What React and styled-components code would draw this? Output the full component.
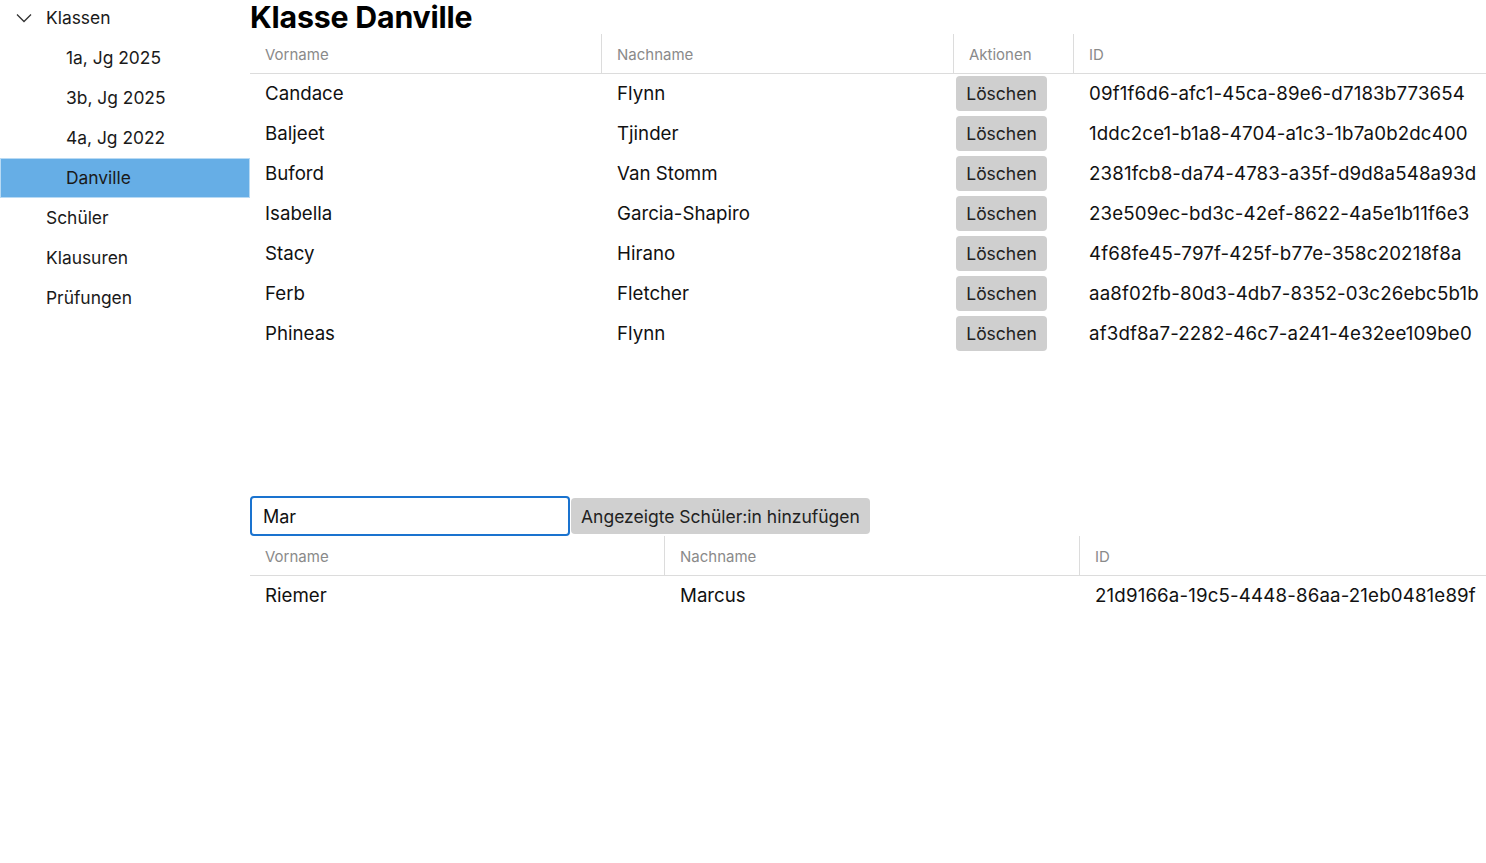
import React from "react";
import styled, { createGlobalStyle } from "styled-components";

const Global = createGlobalStyle`
  html, body { margin: 0; padding: 0; background: #fff; }
  body { font-family: Inter, "Noto Sans", sans-serif; color: #111; }
  * { box-sizing: border-box; }
`;

const Page = styled.div`
  display: flex;
  width: 1486px;
  height: 863px;
`;

const Sidebar = styled.nav`
  width: 250px;
  flex: none;
  display: flex;
  flex-direction: column;
`;

const NavRow = styled.div`
  height: ${(p) => (p.$first ? "38px" : "40px")};
  padding-bottom: ${(p) => (p.$first ? "3px" : "1px")};
  display: flex;
  align-items: center;
  padding-left: ${(p) => p.$indent}px;
  font-size: 17.4px;
  color: #1a1a1a;
  background: ${(p) => (p.$selected ? "#66aee6" : "transparent")};
  border: 1px solid ${(p) => (p.$selected ? "#b8daf4" : "transparent")};
`;

const Chevron = styled.svg`
  width: 16px;
  height: 10px;
  margin-right: 14px;
  margin-left: -31px;
`;

const Main = styled.main`
  flex: 1;
  display: flex;
  flex-direction: column;
  min-width: 0;
`;

const Title = styled.h1`
  margin: 0;
  height: 34px;
  font-size: 30.3px;
  font-weight: 700;
  line-height: 34px;
  color: #000;
  letter-spacing: -0.2px;
`;

const TableArea = styled.div`
  height: 462px;
`;

const Grid = styled.div`
  display: grid;
  grid-template-columns: ${(p) => p.$cols};
`;

const HeadCell = styled.div`
  height: 40px;
  display: flex;
  align-items: center;
  padding: 2px 0 0 ${(p) => p.$pad || 15}px;
  font-size: 15px;
  color: #8a8a8a;
  border-bottom: 1px solid #dcdcdc;
  border-left: ${(p) => (p.$sep ? "1px solid #dcdcdc" : "none")};
`;

const Cell = styled.div`
  height: 40px;
  display: flex;
  align-items: center;
  padding: 0 0 1px ${(p) => p.$pad || 15}px;
  font-size: 18.7px;
  color: #111;
  white-space: nowrap;
  letter-spacing: ${(p) => (p.$id ? "0.15px" : "0")};
`;

const DeleteButton = styled.button`
  width: 91px;
  height: 35px;
  margin: 0 0 0 -13px;
  border: none;
  border-radius: 4px;
  background: #cfcfcf;
  font-family: inherit;
  font-size: 17.5px;
  color: #222;
  padding: 0;
`;

const AddBar = styled.div`
  display: flex;
  align-items: center;
  gap: 1px;
  height: 40px;
`;

const SearchInput = styled.input`
  width: 320px;
  height: 40px;
  border: 2px solid #1a73cf;
  border-radius: 4px;
  padding: 0 11px;
  font-family: inherit;
  font-size: 18px;
  color: #111;
  outline: none;
`;

const AddButton = styled.button`
  height: 36px;
  padding: 0 10px 0 10px;
  border: none;
  border-radius: 4px;
  background: #d0d0d0;
  font-family: inherit;
  font-size: 17.5px;
  color: #222;
`;

const klassen = [
  { first: "Candace", last: "Flynn", id: "09f1f6d6-afc1-45ca-89e6-d7183b773654" },
  { first: "Baljeet", last: "Tjinder", id: "1ddc2ce1-b1a8-4704-a1c3-1b7a0b2dc400" },
  { first: "Buford", last: "Van Stomm", id: "2381fcb8-da74-4783-a35f-d9d8a548a93d" },
  { first: "Isabella", last: "Garcia-Shapiro", id: "23e509ec-bd3c-42ef-8622-4a5e1b11f6e3" },
  { first: "Stacy", last: "Hirano", id: "4f68fe45-797f-425f-b77e-358c20218f8a" },
  { first: "Ferb", last: "Fletcher", id: "aa8f02fb-80d3-4db7-8352-03c26ebc5b1b" },
  { first: "Phineas", last: "Flynn", id: "af3df8a7-2282-46c7-a241-4e32ee109be0" },
];

export default function App() {
  return (
    <>
      <Global />
      <Page>
        <Sidebar>
          <NavRow $first $indent={46}>
            <Chevron viewBox="0 0 16 10">
              <path d="M1 1.5 L8 8.5 L15 1.5" fill="none" stroke="#333" strokeWidth="1.3" />
            </Chevron>
            Klassen
          </NavRow>
          <NavRow $indent={65}>1a, Jg 2025</NavRow>
          <NavRow $indent={65}>3b, Jg 2025</NavRow>
          <NavRow $indent={65}>4a, Jg 2022</NavRow>
          <NavRow $indent={65} $selected>Danville</NavRow>
          <NavRow $indent={45}>Schüler</NavRow>
          <NavRow $indent={45}>Klausuren</NavRow>
          <NavRow $indent={45}>Prüfungen</NavRow>
        </Sidebar>
        <Main>
          <Title>Klasse Danville</Title>
          <TableArea>
            <Grid $cols="351px 352px 120px 1fr">
              <HeadCell>Vorname</HeadCell>
              <HeadCell $sep>Nachname</HeadCell>
              <HeadCell $sep>Aktionen</HeadCell>
              <HeadCell $sep>ID</HeadCell>
              {klassen.map((r) => (
                <React.Fragment key={r.id}>
                  <Cell>{r.first}</Cell>
                  <Cell $pad={16}>{r.last}</Cell>
                  <Cell $pad={16}>
                    <DeleteButton>Löschen</DeleteButton>
                  </Cell>
                  <Cell $pad={16} $id>{r.id}</Cell>
                </React.Fragment>
              ))}
            </Grid>
          </TableArea>
          <AddBar>
            <SearchInput defaultValue="Mar" />
            <AddButton>Angezeigte Schüler:in hinzufügen</AddButton>
          </AddBar>
          <Grid $cols="414px 415px 1fr">
            <HeadCell>Vorname</HeadCell>
            <HeadCell $sep>Nachname</HeadCell>
            <HeadCell $sep>ID</HeadCell>
            <Cell>Riemer</Cell>
            <Cell $pad={16}>Marcus</Cell>
            <Cell $pad={16} $id>21d9166a-19c5-4448-86aa-21eb0481e89f</Cell>
          </Grid>
        </Main>
      </Page>
    </>
  );
}
